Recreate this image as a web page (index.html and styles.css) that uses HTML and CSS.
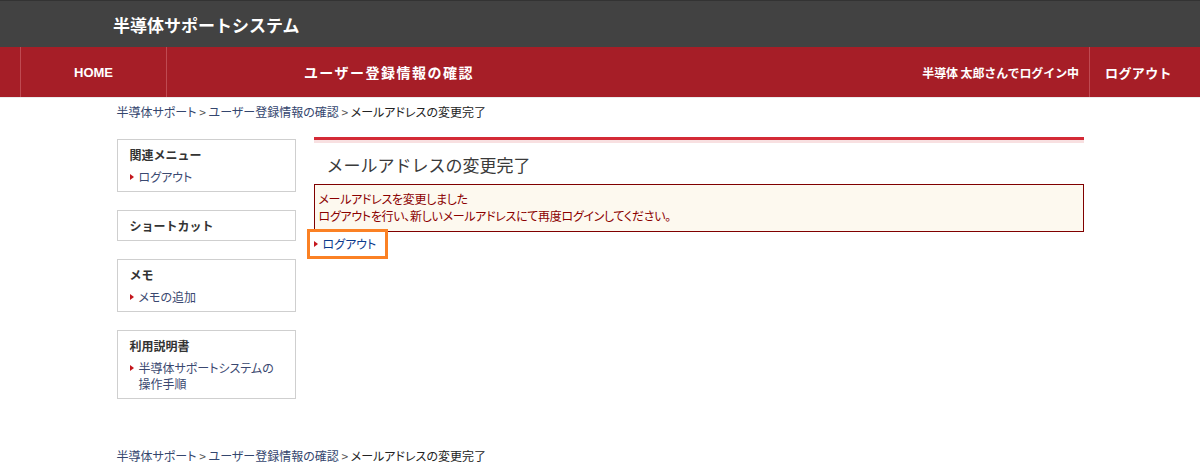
FILE: index.html
```html
<!DOCTYPE html>
<html lang="ja">
<head>
  <meta charset="UTF-8" />
  <meta name="viewport" content="width=device-width, initial-scale=1.0" />
  <title>メールアドレスの変更完了</title>
  <link rel="stylesheet" href="styles.css">
</head>
<body>
  <header class="site-header">
    <div class="site-title">半導体サポートシステム</div>
  </header>

  <nav class="global-nav">
    <a class="nav-home" href="#">HOME</a>
    <div class="nav-title">ユーザー登録情報の確認</div>
    <div class="nav-spacer"></div>
    <div class="nav-user">半導体 太郎さんでログイン中</div>
    <a class="nav-logout" href="#">ログアウト</a>
  </nav>

  <div class="container">
    <div class="breadcrumb">
      <a href="#">半導体サポート</a> &gt; <a href="#">ユーザー登録情報の確認</a> &gt; <span class="current">メールアドレスの変更完了</span>
    </div>

    <div class="columns">
      <aside class="sidebar">
        <div class="side-box">
          <div class="side-title">関連メニュー</div>
          <ul class="side-list">
            <li><a href="#">ログアウト</a></li>
          </ul>
        </div>
        <div class="side-box">
          <div class="side-title">ショートカット</div>
        </div>
        <div class="side-box">
          <div class="side-title">メモ</div>
          <ul class="side-list">
            <li><a href="#">メモの追加</a></li>
          </ul>
        </div>
        <div class="side-box">
          <div class="side-title">利用説明書</div>
          <ul class="side-list">
            <li><a href="#">半導体サポートシステムの操作手順</a></li>
          </ul>
        </div>
      </aside>

      <main class="main">
        <h1 class="page-title">メールアドレスの変更完了</h1>
        <div class="message">
          メールアドレスを変更しました<br>
          ログアウトを行い、新しいメールアドレスにて再度ログインしてください。
        </div>
        <div class="action-links">
          <div class="highlight">
            <a class="arrow-link" href="#">ログアウト</a>
          </div>
        </div>
      </main>
    </div>

    <div class="breadcrumb breadcrumb-bottom">
      <a href="#">半導体サポート</a> &gt; <a href="#">ユーザー登録情報の確認</a> &gt; <span class="current">メールアドレスの変更完了</span>
    </div>
  </div>
</body>
</html>
```

FILE: styles.css
```css
body {
  margin: 0;
  font-family: "Noto Sans CJK JP", "Liberation Sans", sans-serif;
  font-size: 12px;
  color: #333;
  background: #fff;
}
a {
  text-decoration: none;
}
.site-header {
  height: 46px;
  background: #424242;
  border-top: 1px solid #333;
  display: flex;
  align-items: center;
}
.site-title {
  margin-left: 113px;
  color: #fff;
  font-size: 17px;
  font-weight: bold;
}
.global-nav {
  height: 50px;
  background: #a61e27;
  border-bottom: 1px solid #ececec;
  display: flex;
  align-items: stretch;
  padding-left: 20px;
}
.global-nav > * {
  display: flex;
  align-items: center;
  color: #fff;
  font-weight: bold;
}
.nav-home {
  width: 145px;
  justify-content: center;
  border-left: 1px solid #bf4a52;
  border-right: 1px solid #bf4a52;
  font-family: "Liberation Sans", Arial, sans-serif;
  font-size: 13px;
}
.nav-title {
  width: 444px;
  justify-content: center;
  font-size: 14px;
  letter-spacing: 1.5px;
}
.nav-spacer {
  flex: 1;
}
.nav-user {
  font-size: 12px;
  letter-spacing: -0.1px;
  padding-right: 10px;
}
.nav-logout {
  border-left: 1px solid #bf4a52;
  padding: 0 28px 0 15px;
  font-size: 13px;
  letter-spacing: 0.4px;
}
.container {
  width: 967px;
  margin: 0 auto;
}
.breadcrumb,
.side-list,
.message,
.arrow-link {
  font-feature-settings: "palt";
}
.breadcrumb {
  margin-top: 6px;
  line-height: 16px;
  color: #555;
}
.breadcrumb a {
  color: #34466e;
}
.breadcrumb .current {
  color: #222;
}
.columns {
  display: flex;
  gap: 18px;
  margin-top: 17px;
  align-items: flex-start;
}
.sidebar {
  width: 179px;
  flex-shrink: 0;
  padding-top: 2px;
}
.side-box {
  border: 1px solid #cfcfcf;
  padding: 7px 12px 6px 12px;
  margin-bottom: 18px;
}
.side-title {
  font-weight: bold;
  line-height: 16px;
  color: #333;
}
.side-list {
  list-style: none;
  margin: 6px 0 0;
  padding: 0;
}
.side-list li,
.arrow-link {
  display: flex;
  line-height: 16px;
}
.side-list li::before,
.arrow-link::before {
  content: "";
  flex-shrink: 0;
  width: 0;
  height: 0;
  margin: 5px 5px 0 0;
  border-style: solid;
  border-width: 3px 0 3px 4px;
  border-color: transparent transparent transparent #c4161c;
}
.side-list a {
  color: #3a4870;
}
.main {
  flex: 1;
  border-top: 3px solid #d42a36;
}
.main::before {
  content: "";
  display: block;
  height: 3px;
  background: #f8e0e1;
}
.page-title {
  margin: 10px 0 7px 13px;
  font-size: 17px;
  font-weight: normal;
  line-height: 24px;
  color: #3a3a3a;
}
.message {
  border: 1px solid #800000;
  background: #fdf9ef;
  color: #8b0000;
  padding: 5px 4px 7px 4px;
  line-height: 17px;
  letter-spacing: -0.3px;
}
.action-links {
  display: flex;
  margin-top: -3px;
  margin-left: -7px;
}
.highlight {
  border: 3px solid #fb8124;
  padding: 4px 9px 4px 4px;
}
.arrow-link {
  color: #0b3a8c;
}
.breadcrumb-bottom {
  margin-top: 31px;
}
```
